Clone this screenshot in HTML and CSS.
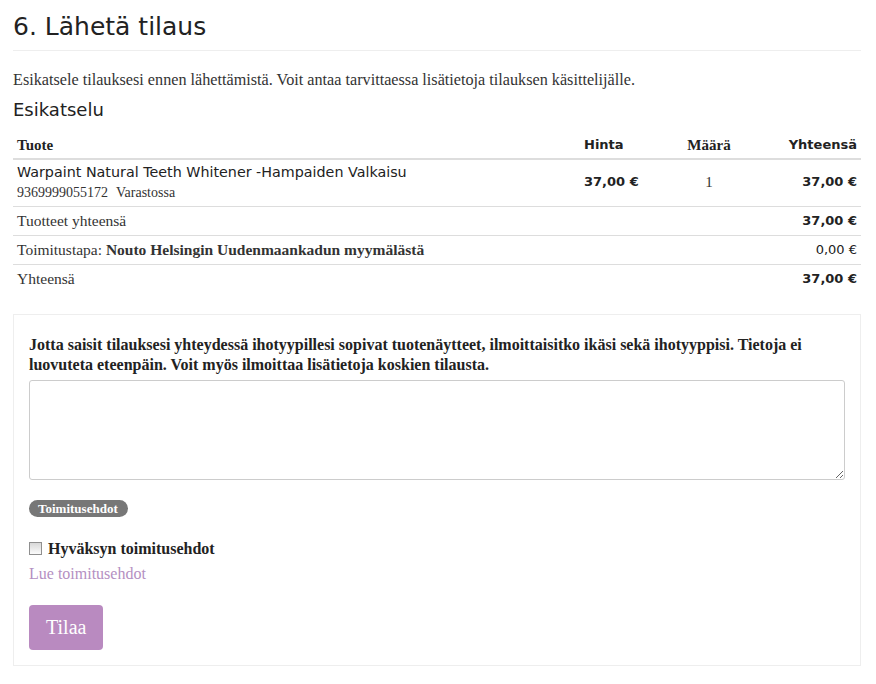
FILE: index.html
```html
<!DOCTYPE html>
<html>
<head>
    <title>Lähetä tilaus</title>
    <link rel="stylesheet" href="styles.css">
</head>
<body>
    <h1 class="page-title">6. Lähetä tilaus</h1>
    <p class="intro">Esikatsele tilauksesi ennen lähettämistä. Voit antaa tarvittaessa lisätietoja tilauksen käsittelijälle.</p>

    <h3 class="sub-title">Esikatselu</h3>
    <table class="cart">
        <thead>
            <tr>
                <th class="col-name">Tuote</th>
                <th class="col-price sans">Hinta</th>
                <th class="col-qty">Määrä</th>
                <th class="col-total sans">Yhteensä</th>
            </tr>
        </thead>
        <tbody>
            <tr class="product">
                <td>
                    <div class="product-name">Warpaint Natural Teeth Whitener -Hampaiden Valkaisu</div>
                    <div class="product-meta"><span>9369999055172</span><span>Varastossa</span></div>
                </td>
                <td class="sans strong">37,00 €</td>
                <td class="col-qty">1</td>
                <td class="col-total sans strong">37,00 €</td>
            </tr>
            <tr>
                <td colspan="3">Tuotteet yhteensä</td>
                <td class="col-total sans strong">37,00 €</td>
            </tr>
            <tr>
                <td colspan="3">Toimitustapa: <strong>Nouto Helsingin Uudenmaankadun myymälästä</strong></td>
                <td class="col-total sans">0,00 €</td>
            </tr>
            <tr>
                <td colspan="3">Yhteensä</td>
                <td class="col-total sans strong">37,00 €</td>
            </tr>
        </tbody>
    </table>

    <div class="order-box">
        <label class="notes-label" for="notes">Jotta saisit tilauksesi yhteydessä ihotyypillesi sopivat tuotenäytteet, ilmoittaisitko ikäsi sekä ihotyyppisi. Tietoja ei luovuteta eteenpäin. Voit myös ilmoittaa lisätietoja koskien tilausta.</label>
        <textarea id="notes" class="notes"></textarea>

        <span class="badge">Toimitusehdot</span>

        <label class="accept"><input type="checkbox"> Hyväksyn toimitusehdot</label>
        <a href="#" class="terms-link">Lue toimitusehdot</a>

        <button class="order-btn">Tilaa</button>
    </div>
</body>
</html>
```

FILE: styles.css
```css
body { margin: 0; padding: 0 15px 0 13px; font-family: "Liberation Serif", serif; font-size: 16px; line-height: 20px; color: #333; background: #fff; }
.sans { font-family: "DejaVu Sans", sans-serif; }
.strong { font-weight: bold; }

.page-title { font-family: "DejaVu Sans", sans-serif; font-weight: normal; font-size: 25px; line-height: 30px; color: #222; margin: 0; padding: 12px 0 8px; border-bottom: 1px solid #eee; }
.intro { margin: 19px 0 9px; font-size: 16.2px; }
.sub-title { font-family: "DejaVu Sans", sans-serif; font-weight: normal; font-size: 18px; line-height: 22px; color: #222; margin: 0 0 6px; }

.cart { width: 100%; border-collapse: collapse; margin-bottom: 21px; table-layout: fixed; }
.cart th { text-align: left; padding: 8px 4px 3px; border-bottom: 2px solid #ddd; color: #222; font-size: 15px; }
.cart th.sans { font-size: 13px; }
.cart td { padding: 4px; border-top: 1px solid #ddd; vertical-align: middle; font-size: 15.5px; }
.cart tbody tr:first-child td { border-top: none; padding: 3px 4px 5px; }
.cart td.sans { font-size: 13px; color: #222; }
.cart td.col-qty { font-size: 15px; }
.cart .col-price { width: 66px; }
.cart .col-qty { text-align: center; width: 102px; }
.cart .col-total { text-align: right; width: 89px; }
.product-name { font-family: "DejaVu Sans", sans-serif; font-size: 14.3px; line-height: 18px; color: #222; }
.product-meta { font-size: 14px; line-height: 16px; margin-top: 4px; }
.product-meta span + span { margin-left: 8px; }

.order-box { border: 1px solid #eee; padding: 20px 15px 15px; }
.notes-label { display: block; font-weight: bold; margin-bottom: 5px; color: #222; }
.notes { display: block; width: 100%; height: 100px; box-sizing: border-box; border: 1px solid #ccc; border-radius: 3px; margin: 0 0 20px; }
.badge { display: block; width: max-content; background: #777; color: #fff; font-weight: bold; font-size: 13px; line-height: 15px; padding: 1px 10px 1px 9px; border-radius: 9px; }
.accept { display: block; margin-top: 22px; font-weight: bold; color: #222; }
.accept input { appearance: none; width: 13px; height: 13px; margin: 0 2px 0 0; vertical-align: -1px; border: 1px solid #8f8f8f; background: linear-gradient(#d8d8d8, #fbfbfb); }
.terms-link { display: block; margin-top: 5px; color: #b48fc2; text-decoration: none; }
.order-btn { display: block; margin-top: 21px; padding: 11px 17px; background: #b98ac0; color: #fff; border: none; border-radius: 4px; font-family: "Liberation Serif", serif; font-size: 20px; line-height: 23px; cursor: pointer; }
```
